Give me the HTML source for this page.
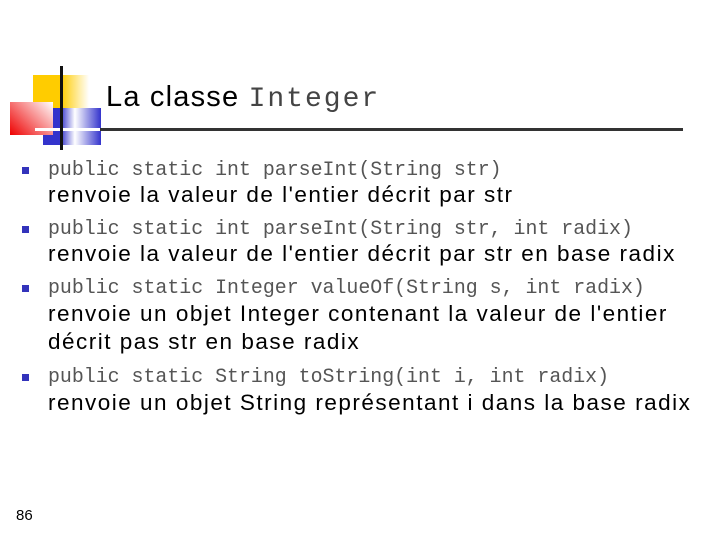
<!DOCTYPE html>
<html><head><meta charset="utf-8"><style>
body{margin:0;width:720px;height:540px;background:#fff;position:relative;overflow:hidden;font-family:"Liberation Sans",sans-serif}
.a{position:absolute}
.m{position:absolute;left:48px;font-family:"Liberation Mono",monospace;font-size:19.9px;color:#555;white-space:nowrap;line-height:1}
.d{position:absolute;left:48px;font-size:22.5px;letter-spacing:1.5px;color:#000;white-space:nowrap;line-height:1}
.b{position:absolute;left:22px;width:7px;height:7px;background:#3333bb}
</style></head><body>
<div class="a" style="left:33px;top:75px;width:56px;height:33px;background:linear-gradient(90deg,#ffcc00 0,#ffcc00 50%,#fff 100%)"></div>
<div class="a" style="left:43px;top:108px;width:58px;height:37px;background:linear-gradient(90deg,#3333cc 0,#3333cc 30%,#fff 55%,#3333cc 100%)"></div>
<div class="a" style="left:10px;top:102px;width:43px;height:33px;background:linear-gradient(45deg,#ee0000,#ffffff)"></div>
<div class="a" style="left:35px;top:128px;width:66px;height:3px;background:#fff"></div>
<div class="a" style="left:60px;top:66px;width:3px;height:84px;background:#111"></div>
<div class="a" style="left:106px;top:81px;font-size:29px;letter-spacing:1.2px;color:#000;white-space:nowrap">La classe <span style="font-family:'Liberation Mono',monospace;font-size:28px;letter-spacing:2px;color:#444">Integer</span></div>
<div class="a" style="left:100px;top:128px;width:583px;height:3px;background:#333"></div>
<div class="b" style="top:167px"></div><div class="m" style="top:160px">public static int parseInt(String str)</div>
<div class="d" style="top:184px">renvoie la valeur de l'entier décrit par str</div>
<div class="b" style="top:226px"></div><div class="m" style="top:219px">public static int parseInt(String str, int radix)</div>
<div class="d" style="top:243px">renvoie la valeur de l'entier décrit par str en base radix</div>
<div class="b" style="top:285px"></div><div class="m" style="top:278px">public static Integer valueOf(String s, int radix)</div>
<div class="d" style="top:303px">renvoie un objet Integer contenant la valeur de l'entier</div>
<div class="d" style="top:331px">décrit pas str en base radix</div>
<div class="b" style="top:374px"></div><div class="m" style="top:367px">public static String toString(int i, int radix)</div>
<div class="d" style="top:392px">renvoie un objet String représentant i dans la base radix</div>
<div class="a" style="left:16px;top:507px;font-size:15px">86</div>
</body></html>
